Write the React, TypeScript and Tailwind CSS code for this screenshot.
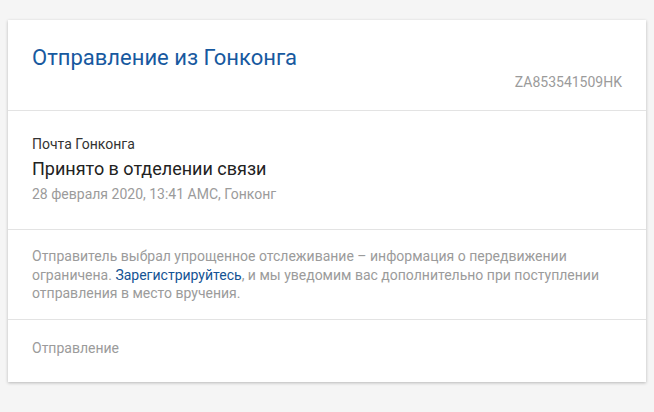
import React from 'react';

const App: React.FC = () => {
  return (
    <div className="min-h-[412px] w-full bg-[#f5f5f5] pt-5 pl-2 pr-2 font-['Roboto',sans-serif]">
      <div className="w-[638px] bg-white shadow-[0_1px_3px_rgba(0,0,0,0.25)]">
        {/* Header */}
        <div className="border-b border-[#e3e3e3] px-6 pt-6 pb-[18px]">
          <h1 className="text-[22px] leading-[28px] text-[#17599f]">Отправление из Гонконга</h1>
          <div className="text-right text-[14px] leading-[20px] text-[#9b9b9b]">ZA853541509HK</div>
        </div>

        {/* Last status */}
        <div className="border-b border-[#e3e3e3] px-6 pt-6 pb-[26px]">
          <div className="text-[14px] leading-[18px] text-[#333]">Почта Гонконга</div>
          <div className="mt-1 text-[18px] leading-[24px] text-[#222]">Принято в отделении связи</div>
          <div className="mt-1 text-[14px] leading-[18px] text-[#9b9b9b]">
            28 февраля 2020, 13:41 АМС, Гонконг
          </div>
        </div>

        {/* Notice */}
        <div className="border-b border-[#e3e3e3] px-6 pt-[17px] pb-[16px]">
          <p className="text-[14px] leading-[18.5px] text-[#9b9b9b]">
            Отправитель выбрал упрощенное отслеживание – информация о передвижении ограничена.{' '}
            <a href="#" className="text-[#145394]">
              Зарегистрируйтесь
            </a>
            , и мы уведомим вас дополнительно при поступлении отправления в место вручения.
          </p>
        </div>

        {/* Footer */}
        <div className="px-6 pt-[18px] pb-6">
          <div className="text-[14px] leading-[20px] text-[#9b9b9b]">Отправление</div>
        </div>
      </div>
    </div>
  );
};

export default App;
